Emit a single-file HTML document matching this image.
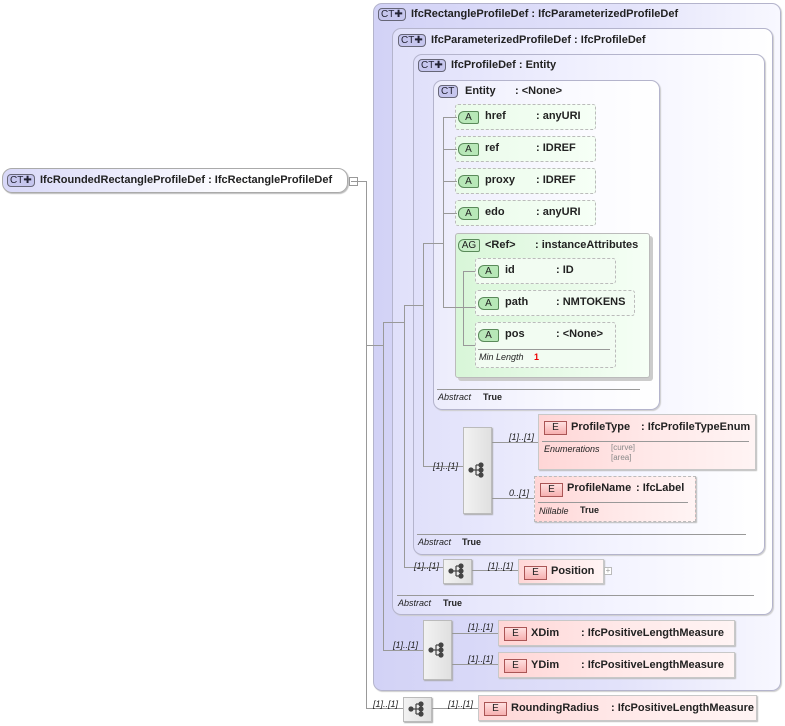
<!DOCTYPE html>
<html><head><meta charset="utf-8"><style>
body{margin:0;width:785px;height:726px;background:#fff;position:relative;overflow:hidden;font-family:"Liberation Sans",sans-serif;font-size:11px;font-weight:bold;color:#222}
div,span{box-sizing:border-box}
.a{position:absolute}
.ct{position:absolute;border:1px solid #b4b4cc;border-radius:9px;background:linear-gradient(90deg,#d2d2f6 0%,#e2e2fa 60%,#f8f8ff 100%);box-shadow:1px 1px 1px #ccc}
.ct2{background:linear-gradient(90deg,#e0e0fa,#f4f4ff 60%,#fff)}
.bdg{position:absolute;height:13px;border:1px solid #667;border-radius:4px;background:#c6c6ee;font-size:10px;font-weight:normal;line-height:11px;padding:0 2px;color:#223}
.t{position:absolute;white-space:nowrap}
.attr{position:absolute;height:26px;border:1px dashed #bbb;background:linear-gradient(90deg,#eafbea,#f6fff6);border-radius:3px 3px 3px 3px}
.ab{position:absolute;left:2px;top:6px;width:21px;height:13px;border:1px solid #5a8a5a;background:#b8e8b8;border-radius:6px 2px 2px 6px;font-size:10px;font-weight:normal;text-align:center;line-height:11px}
.el{position:absolute;height:26px;border:1px solid #c8c8c8;background:linear-gradient(90deg,#ffd6d6,#ffe8e8 50%,#fff4f4);box-shadow:1px 1px 1px #bbb}
.eb{position:absolute;left:5px;top:6px;width:23px;height:14px;border:1px solid #a55;background:linear-gradient(#ffe0e0,#f7b0b0);font-size:10px;font-weight:normal;text-align:center;line-height:12px}
.seq{position:absolute;border:1px solid #bbb;background:linear-gradient(90deg,#f2f2f2,#e0e0e0);box-shadow:1px 1px 1px #aaa}
.ln{position:absolute;background:#999}
.h{height:1px}.v{width:1px}
.m{position:absolute;font-style:italic;font-weight:normal;font-size:9px;color:#222}
.sm{position:absolute;font-style:italic;font-weight:normal;font-size:9px}
.sep{position:absolute;height:1px;background:#999}
</style></head><body>

<div class="a" style="left:2px;top:168px;width:346px;height:25px;border:1px solid #aaa;border-radius:10px;background:linear-gradient(90deg,#d8d8f8,#fff 70%);box-shadow:1px 1px 1px #bbb"></div>
<span class="bdg" style="left:7px;top:174px;width:28px">CT✚</span>
<span class="t" style="left:40px;top:174px">IfcRoundedRectangleProfileDef : IfcRectangleProfileDef</span>
<div class="a" style="left:349px;top:177px;width:9px;height:9px;border:1px solid #999;background:#fff"></div>
<div class="ln h" style="left:351px;top:181px;width:5px"></div>

<div class="ct" style="left:373px;top:3px;width:408px;height:688px"></div>
<span class="bdg" style="left:378px;top:8px;width:28px">CT✚</span>
<span class="t" style="left:411px;top:8px">IfcRectangleProfileDef : IfcParameterizedProfileDef</span>

<div class="ct ct2" style="left:392px;top:28px;width:381px;height:587px"></div>
<span class="bdg" style="left:398px;top:34px;width:28px">CT✚</span>
<span class="t" style="left:431px;top:34px">IfcParameterizedProfileDef : IfcProfileDef</span>
<div class="sep" style="left:397px;top:595px;width:357px"></div>
<span class="m" style="left:398px;top:598px">Abstract</span><span class="t" style="left:443px;top:598px;font-size:9px">True</span>

<div class="ct ct2" style="left:413px;top:54px;width:352px;height:501px"></div>
<span class="bdg" style="left:418px;top:59px;width:28px">CT✚</span>
<span class="t" style="left:451px;top:59px">IfcProfileDef : Entity</span>
<div class="sep" style="left:417px;top:534px;width:329px"></div>
<span class="m" style="left:418px;top:537px">Abstract</span><span class="t" style="left:462px;top:537px;font-size:9px">True</span>

<div class="ct ct2" style="left:433px;top:80px;width:227px;height:330px;background:linear-gradient(90deg,#ececfc,#fafaff 60%,#fff)"></div>
<span class="bdg" style="left:438px;top:85px;width:20px">CT</span>
<span class="t" style="left:465px;top:85px">Entity</span><span class="t" style="left:515px;top:85px">: &lt;None&gt;</span>
<div class="sep" style="left:437px;top:389px;width:203px"></div>
<span class="m" style="left:438px;top:392px">Abstract</span><span class="t" style="left:483px;top:392px;font-size:9px">True</span>

<div class="attr" style="left:455px;top:104px;width:141px"><span class="ab">A</span><span class="t" style="left:29px;top:5px">href</span><span class="t" style="left:80px;top:5px">: anyURI</span></div>
<div class="attr" style="left:455px;top:136px;width:141px"><span class="ab">A</span><span class="t" style="left:29px;top:5px">ref</span><span class="t" style="left:80px;top:5px">: IDREF</span></div>
<div class="attr" style="left:455px;top:168px;width:141px"><span class="ab">A</span><span class="t" style="left:29px;top:5px">proxy</span><span class="t" style="left:80px;top:5px">: IDREF</span></div>
<div class="attr" style="left:455px;top:200px;width:141px"><span class="ab">A</span><span class="t" style="left:29px;top:5px">edo</span><span class="t" style="left:80px;top:5px">: anyURI</span></div>

<div class="a" style="left:458px;top:236px;width:195px;height:145px;background:#ccc;border-radius:3px"></div>
<div class="a" style="left:455px;top:233px;width:195px;height:145px;border:1px solid #bbb;background:linear-gradient(90deg,#d8f6d8,#eafbea 60%,#f6fff6);border-radius:3px"></div>
<span class="ab" style="left:458px;top:239px;width:22px;background:#c8eec8">AG</span>
<span class="t" style="left:485px;top:239px">&lt;Ref&gt;</span><span class="t" style="left:535px;top:239px">: instanceAttributes</span>
<div class="attr" style="left:475px;top:258px;width:141px;background:#f2fcf2"><span class="ab">A</span><span class="t" style="left:29px;top:5px">id</span><span class="t" style="left:80px;top:5px">: ID</span></div>
<div class="attr" style="left:475px;top:290px;width:160px;background:#f2fcf2"><span class="ab">A</span><span class="t" style="left:29px;top:5px">path</span><span class="t" style="left:80px;top:5px">: NMTOKENS</span></div>
<div class="attr" style="left:475px;top:322px;width:141px;height:46px;background:#f2fcf2"><span class="ab">A</span><span class="t" style="left:29px;top:5px">pos</span><span class="t" style="left:80px;top:5px">: &lt;None&gt;</span>
<div class="sep" style="left:2px;top:26px;width:132px"></div><span class="sm" style="left:3px;top:29px">Min Length</span><span class="t" style="left:58px;top:29px;font-size:9px;color:#e00">1</span></div>

<div class="ln v" style="left:366px;top:181px;height:527px"></div>
<div class="ln h" style="left:356px;top:181px;width:10px"></div>
<div class="ln h" style="left:366px;top:345px;width:18px"></div>
<div class="ln v" style="left:383px;top:322px;height:329px"></div>
<div class="ln h" style="left:383px;top:322px;width:21px"></div>
<div class="ln v" style="left:404px;top:305px;height:262px"></div>
<div class="ln h" style="left:404px;top:305px;width:20px"></div>
<div class="ln v" style="left:423px;top:243px;height:223px"></div>
<div class="ln h" style="left:423px;top:243px;width:20px"></div>
<div class="ln v" style="left:443px;top:117px;height:190px"></div>
<div class="ln h" style="left:443px;top:117px;width:14px"></div>
<div class="ln h" style="left:443px;top:149px;width:14px"></div>
<div class="ln h" style="left:443px;top:181px;width:14px"></div>
<div class="ln h" style="left:443px;top:213px;width:14px"></div>
<div class="ln h" style="left:443px;top:307px;width:32px"></div>
<div class="ln v" style="left:463px;top:271px;height:75px"></div>
<div class="ln h" style="left:463px;top:271px;width:12px"></div>
<div class="ln h" style="left:463px;top:345px;width:12px"></div>

<div class="ln h" style="left:423px;top:466px;width:40px"></div>
<div class="ln h" style="left:404px;top:567px;width:39px"></div>
<div class="ln h" style="left:383px;top:650px;width:40px"></div>
<div class="ln h" style="left:366px;top:708px;width:37px"></div>

<div class="seq" style="left:463px;top:427px;width:29px;height:87px"></div>
<div class="ln h" style="left:492px;top:442px;width:46px"></div>
<div class="ln h" style="left:492px;top:498px;width:42px"></div>
<span class="m" style="left:433px;top:461px">[1]..[1]</span>
<span class="m" style="left:509px;top:432px">[1]..[1]</span>
<span class="m" style="left:509px;top:488px">0..[1]</span>
<div class="el" style="left:538px;top:414px;width:218px;height:56px"><span class="eb">E</span><span class="t" style="left:32px;top:6px">ProfileType</span><span class="t" style="left:102px;top:6px">: IfcProfileTypeEnum</span>
<div class="sep" style="left:3px;top:26px;width:207px"></div><span class="sm" style="left:5px;top:29px">Enumerations</span><span class="t" style="left:72px;top:28px;font-size:8px;font-weight:normal;color:#888;line-height:10px">[curve]<br>[area]</span></div>
<div class="el" style="left:534px;top:476px;width:162px;height:46px;border:1px dashed #bbb"><span class="eb">E</span><span class="t" style="left:32px;top:5px">ProfileName</span><span class="t" style="left:101px;top:5px">: IfcLabel</span>
<div class="sep" style="left:3px;top:25px;width:150px"></div><span class="sm" style="left:4px;top:29px">Nillable</span><span class="t" style="left:45px;top:28px;font-size:9px">True</span></div>

<div class="seq" style="left:443px;top:559px;width:29px;height:25px"></div>
<div class="ln h" style="left:472px;top:570px;width:46px"></div>
<span class="m" style="left:414px;top:561px">[1]..[1]</span>
<span class="m" style="left:488px;top:561px">[1]..[1]</span>
<div class="el" style="left:518px;top:559px;width:86px;height:25px"><span class="eb">E</span><span class="t" style="left:32px;top:5px">Position</span></div>
<div class="a" style="left:604px;top:567px;width:8px;height:8px;border:1px solid #bbb;background:#fff;font-size:8px;line-height:6px;text-align:center;color:#999;font-weight:normal">+</div>

<div class="seq" style="left:423px;top:620px;width:29px;height:60px"></div>
<div class="ln h" style="left:452px;top:633px;width:46px"></div>
<div class="ln h" style="left:452px;top:664px;width:46px"></div>
<span class="m" style="left:393px;top:640px">[1]..[1]</span>
<span class="m" style="left:468px;top:622px">[1]..[1]</span>
<span class="m" style="left:468px;top:654px">[1]..[1]</span>
<div class="el" style="left:498px;top:620px;width:237px;height:26px"><span class="eb">E</span><span class="t" style="left:32px;top:6px">XDim</span><span class="t" style="left:82px;top:6px">: IfcPositiveLengthMeasure</span></div>
<div class="el" style="left:498px;top:652px;width:237px;height:26px"><span class="eb">E</span><span class="t" style="left:32px;top:6px">YDim</span><span class="t" style="left:82px;top:6px">: IfcPositiveLengthMeasure</span></div>

<div class="seq" style="left:403px;top:697px;width:29px;height:25px"></div>
<div class="ln h" style="left:432px;top:708px;width:46px"></div>
<span class="m" style="left:373px;top:699px">[1]..[1]</span>
<span class="m" style="left:448px;top:699px">[1]..[1]</span>
<div class="el" style="left:478px;top:695px;width:279px;height:26px"><span class="eb">E</span><span class="t" style="left:32px;top:6px">RoundingRadius</span><span class="t" style="left:132px;top:6px">: IfcPositiveLengthMeasure</span></div>

<svg class="a" style="left:0;top:0" width="785" height="726">
<defs><g id="si" fill="#444" stroke="#444" stroke-width="1.2">
<circle cx="0" cy="0" r="2"/><line x1="0" y1="0" x2="5" y2="0"/><line x1="5" y1="-5" x2="5" y2="5"/>
<line x1="5" y1="-5" x2="10" y2="-5"/><line x1="5" y1="0" x2="10" y2="0"/><line x1="5" y1="5" x2="10" y2="5"/>
<circle cx="10" cy="-5" r="2"/><circle cx="10" cy="0" r="2"/><circle cx="10" cy="5" r="2"/></g></defs>
<use href="#si" x="471" y="470"/>
<use href="#si" x="451" y="571"/>
<use href="#si" x="431" y="650"/>
<use href="#si" x="411" y="709"/>
</svg>
</body></html>
